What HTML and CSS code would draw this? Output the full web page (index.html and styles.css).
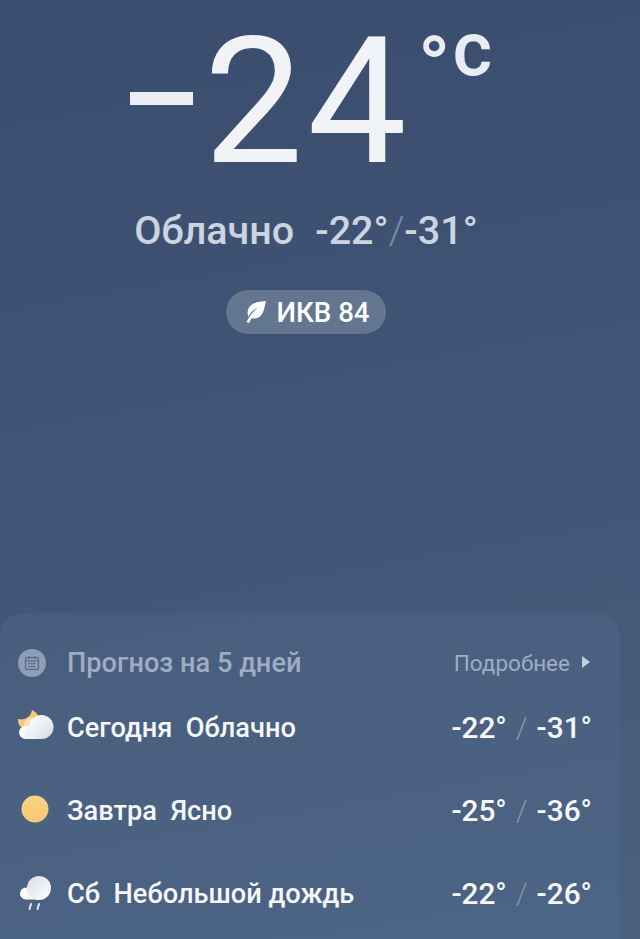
FILE: index.html
```html
<!DOCTYPE html>
<html lang="ru">
    <head>
        <meta charset="UTF-8">
        <meta name="viewport" content="width=device-width, initial-scale=1.0">
        <title>Погода</title>
        <link rel="stylesheet" href="styles.css">
    </head>
<body>
    <section class="now">
        <div class="temp">
            <span class="temp-minus"></span>
            <span class="temp-value">24</span>
            <span class="temp-unit"><span class="temp-deg">°</span>c</span>
        </div>
        <div class="summary">
            <span>Облачно</span>
            <span>-22°<span class="slash">/</span>-31°</span>
        </div>
        <div class="aqi">
            <svg class="aqi-leaf" viewBox="0 0 20 22" width="20" height="22">
                <path fill="#ffffff" d="M20 0C13 .5 5.500 1.500 2.500 7.500 1 11 1.500 13.500 2.500 15.500 4.500 11.500 7.500 8.500 12 6.500 8 9.500 3.500 14.500 .5 21l2.500 1c.8-2 1.700-3.500 2.700-4.800 4.300 1 8.500-.5 10.800-5C18.500 8.500 19 4 20 0z"/>
            </svg>
            <span>ИКВ 84</span>
        </div>
    </section>

    <section class="forecast">
        <header class="forecast-head">
            <span class="cal">
                <svg viewBox="0 0 16 16" width="16" height="16" fill="none" stroke="#4f6483" stroke-width="1.100">
                    <rect x="1.500" y="2.500" width="13" height="12" rx="2"/>
                    <path d="M1.500 6h13M5 1v3M11 1v3"/>
                    <path stroke-width="1.400" stroke-dasharray="1.500 1" d="M4.500 8.500h7.500M4.500 11.500h7.500"/>
                </svg>
            </span>
            <span class="forecast-title">Прогноз на 5 дней</span>
            <span class="more">Подробнее<span class="more-arrow"></span></span>
        </header>

        <div class="day">
            <svg class="day-icon" viewBox="0 0 36 36" width="36" height="36">
                <defs>
                    <linearGradient id="cloudA" x1="0" y1="0" x2="1" y2="1">
                        <stop offset="0" stop-color="#ffffff"/>
                        <stop offset="1" stop-color="#d5dbe5"/>
                    </linearGradient>
                </defs>
                <path fill="#f7c977" d="M14 0A10.500 10.500 0 1 1 0 9 11 11 0 0 0 14 0z"/>
                <circle cx="14" cy="16" r="8.500" fill="#ffffff" fill-opacity=".45"/>
                <circle cx="7.500" cy="22.500" r="6.500" fill="#fbfbfc"/>
                <rect x="7.500" y="19" width="16" height="10" fill="#eef0f4"/>
                <circle cx="23.500" cy="17" r="12" fill="url(#cloudA)"/>
            </svg>
            <span class="day-text">Сегодня&nbsp; Облачно</span>
            <span class="day-temps">-22°<span class="slash">/</span>-31°</span>
        </div>

        <div class="day">
            <svg class="day-icon" viewBox="0 0 36 36" width="36" height="36">
                <defs>
                    <linearGradient id="sun" x1="0" y1="0" x2="0" y2="1">
                        <stop offset="0" stop-color="#fcd182"/>
                        <stop offset="1" stop-color="#f8c877"/>
                    </linearGradient>
                </defs>
                <circle cx="17" cy="16" r="13.500" fill="url(#sun)"/>
            </svg>
            <span class="day-text">Завтра&nbsp; Ясно</span>
            <span class="day-temps">-25°<span class="slash">/</span>-36°</span>
        </div>

        <div class="day">
            <svg class="day-icon" viewBox="0 0 36 36" width="36" height="36">
                <defs>
                    <linearGradient id="cloudB" x1="0" y1="0" x2="1" y2="1">
                        <stop offset="0" stop-color="#d9dee6"/>
                        <stop offset="1" stop-color="#ffffff"/>
                    </linearGradient>
                </defs>
                <circle cx="8" cy="17.500" r="6" fill="#ffffff"/>
                <rect x="8" y="14" width="14" height="9.500" fill="#fbfbfc"/>
                <circle cx="21" cy="12" r="12" fill="url(#cloudB)"/>
                <path stroke="#e8ebf0" stroke-width="2" stroke-linecap="round" d="M13 28l-1.500 5M21 28l-1.500 5"/>
            </svg>
            <span class="day-text">Сб&nbsp; Небольшой дождь</span>
            <span class="day-temps">-22°<span class="slash">/</span>-26°</span>
        </div>
    </section>
</body>
</html>
```

FILE: styles.css
```css
html,
body {
    height: 100%;
}

body {
    margin: 0;
    height: 939px;
    overflow: hidden;
    display: flex;
    flex-direction: column;
    font-family: 'Roboto', sans-serif;
    background: linear-gradient(170deg, #3a4d6f 0%, #3f5374 40%, #49617f 100%);
    color: #ffffff;
}

.now {
    display: flex;
    flex-direction: column;
    align-items: center;
    height: 613px;
    padding-right: 28px;
    box-sizing: border-box;
}

.temp {
    display: flex;
    align-items: flex-start;
    height: 196px;
    padding-left: 10px;
    color: #f1f3f7;
}

.temp-minus {
    width: 63px;
    height: 13px;
    margin-top: 92px;
    margin-right: 11px;
    background-color: #eceef3;
}

.temp-value {
    font-size: 177px;
    font-weight: 400;
    line-height: 204px;
    letter-spacing: 4px;
}

.temp-unit {
    display: flex;
    font-size: 76px;
    font-weight: 500;
    line-height: 70px;
    margin-top: 14px;
    margin-left: 7px;
    color: #e9ecf2;
}

.temp-deg {
    font-size: 86px;
    margin-top: 18px;
    margin-right: 2px;
}

.summary {
    display: flex;
    gap: 21px;
    margin-top: 14px;
    font-size: 39.500px;
    font-weight: 500;
    line-height: 42px;
    color: #cdd4e1;
}

.slash {
    color: #7b8ca8;
    font-weight: 300;
}

.aqi {
    display: flex;
    align-items: center;
    gap: 10px;
    height: 44px;
    margin-top: 38px;
    padding: 0 16px 0 20px;
    border-radius: 22px;
    background-color: #62768f;
    font-size: 27.700px;
    font-weight: 500;
}

.forecast {
    width: 620px;
    flex: 1;
    box-sizing: border-box;
    padding: 30px 28px 0 18px;
    border-radius: 24px 24px 0 0;
    background: linear-gradient(170deg, #485e7e 0%, #4c6485 100%);
}

.forecast-head {
    display: flex;
    align-items: center;
    height: 40px;
}

.cal {
    display: flex;
    align-items: center;
    justify-content: center;
    width: 28px;
    height: 28px;
    margin-right: 21px;
    border-radius: 50%;
    background-color: #8f9eb5;
}

.forecast-title {
    flex: 1;
    font-size: 27.200px;
    font-weight: 500;
    color: #9fadc3;
}

.more {
    display: flex;
    align-items: center;
    font-size: 22.500px;
    color: #9fadc3;
}

.more-arrow {
    width: 0;
    height: 0;
    margin-left: 12px;
    margin-right: 2px;
    margin-top: -3px;
    border-left: 8px solid #c4cddb;
    border-top: 6px solid transparent;
    border-bottom: 6px solid transparent;
}

.day {
    display: flex;
    align-items: center;
    height: 83px;
}

.day:first-of-type {
    margin-top: 3px;
}

.day-icon {
    margin-right: 13px;
    flex-shrink: 0;
}

.day-text {
    flex: 1;
    font-size: 27.200px;
    font-weight: 500;
    color: #f6f7fa;
}

.day-temps {
    font-size: 29.800px;
    font-weight: 500;
    color: #f6f7fa;
}

.day-temps .slash {
    margin: 0 9px;
    color: #84959f;
}
```
